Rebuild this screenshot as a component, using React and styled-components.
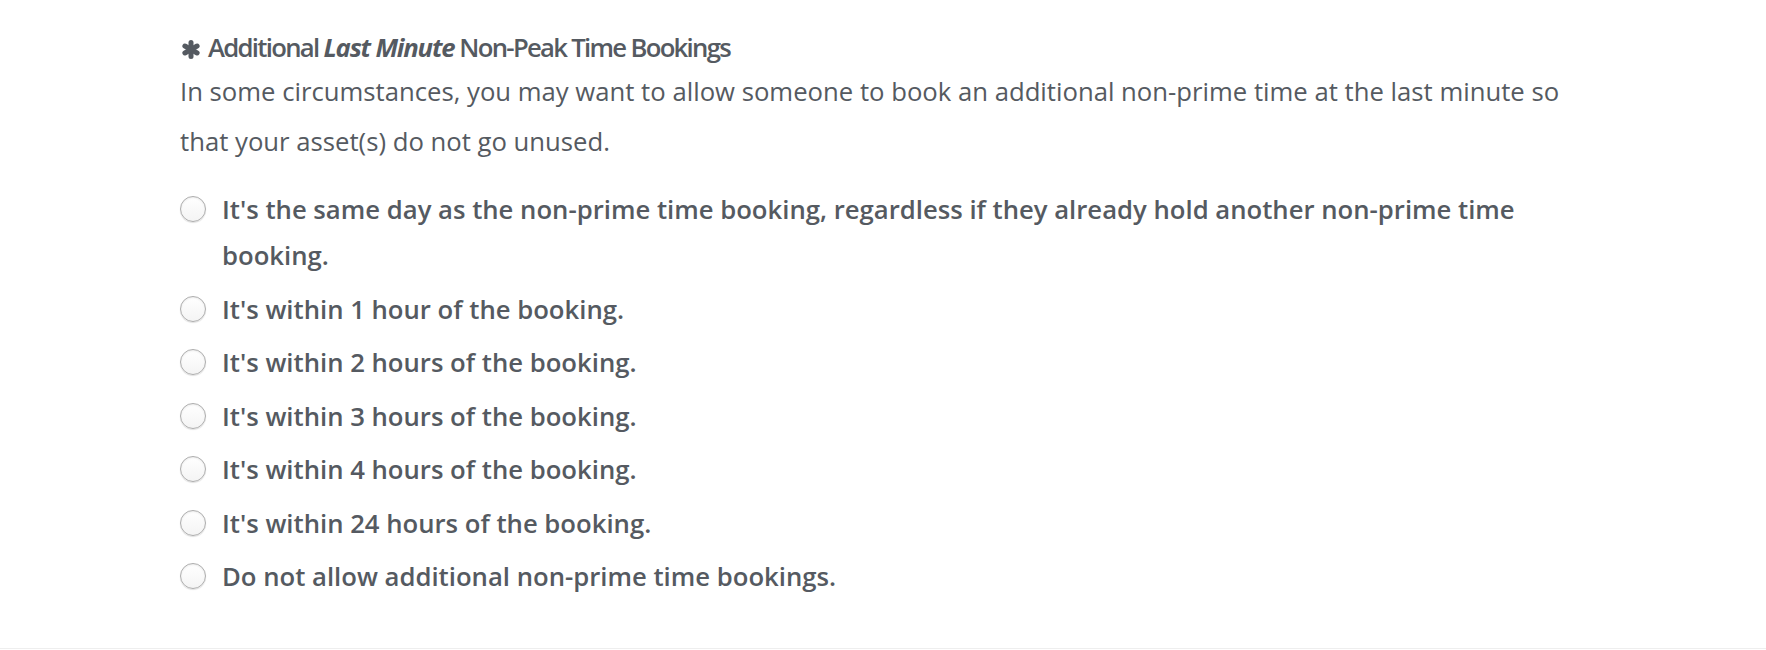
import React from "react";
import styled, { createGlobalStyle } from "styled-components";

const GlobalStyle = createGlobalStyle`
  html, body {
    margin: 0;
    padding: 0;
    background: #ffffff;
  }
  body {
    font-family: "Open Sans", "Noto Sans", sans-serif;
    color: #555a61;
    -webkit-font-smoothing: antialiased;
  }
`;

const Section = styled.section`
  box-sizing: border-box;
  height: 649px;
  padding: 27.5px 180px 0;
  border-bottom: 1px solid #eeeeee;
`;

const Heading = styled.h3`
  margin: 0;
  font-size: 25.7px;
  line-height: 39.6px;
  font-weight: 600;
  letter-spacing: -1.7px;
  color: #555a61;

  em {
    font-style: italic;
    font-weight: 700;
    letter-spacing: -1.2px;
  }
`;

const StarIcon = styled.svg`
  width: 20px;
  height: 19px;
  margin: 0 7px 0 1px;
  vertical-align: -2px;
`;

const Star = () => (
  <StarIcon viewBox="0 0 20 19" aria-hidden="true">
    <g stroke="#555a61" strokeWidth="5" strokeLinecap="round">
      <line x1="10" y1="2.5" x2="10" y2="16.5" />
      <line x1="3.9" y1="6" x2="16.1" y2="13" />
      <line x1="3.9" y1="13" x2="16.1" y2="6" />
    </g>
  </StarIcon>
);

const Description = styled.p`
  margin: 0 0 21px;
  font-size: 25.7px;
  line-height: 49.5px;
  font-weight: 400;
`;

const Options = styled.div`
  display: flex;
  flex-direction: column;
  gap: 7.5px;
`;

const Option = styled.label`
  display: flex;
  align-items: flex-start;
  gap: 16px;
  font-size: 25.7px;
  line-height: 46px;
  font-weight: 600;
  cursor: pointer;
`;

const RadioInput = styled.input.attrs({ type: "radio" })`
  appearance: none;
  -webkit-appearance: none;
  box-sizing: border-box;
  flex: none;
  width: 26px;
  height: 26px;
  margin: 9px 0 0 0;
  border-radius: 50%;
  border: 1px solid #adadad;
  background: linear-gradient(#ffffff, #f4f4f4);
  box-shadow: inset 0 1px 2px rgba(0, 0, 0, 0.08), 0 1px 1px rgba(0, 0, 0, 0.12);
  cursor: pointer;

  &:checked {
    background: radial-gradient(circle, #555a61 0 5px, #ffffff 6px);
  }
`;

const OptionText = styled.span`
  flex: 1;
`;

const options = [
  "It's the same day as the non-prime time booking, regardless if they already hold another non-prime time booking.",
  "It's within 1 hour of the booking.",
  "It's within 2 hours of the booking.",
  "It's within 3 hours of the booking.",
  "It's within 4 hours of the booking.",
  "It's within 24 hours of the booking.",
  "Do not allow additional non-prime time bookings.",
];

export default function App() {
  return (
    <>
      <GlobalStyle />
      <Section>
        <Heading>
          <Star />
          Additional <em>Last Minute</em> Non-Peak Time Bookings
        </Heading>
        <Description>
          In some circumstances, you may want to allow someone to book an
          additional non-prime time at the last minute so that your asset(s)
          do not go unused.
        </Description>
        <Options>
          {options.map((text) => (
            <Option key={text}>
              <RadioInput name="last-minute" />
              <OptionText>{text}</OptionText>
            </Option>
          ))}
        </Options>
      </Section>
    </>
  );
}
